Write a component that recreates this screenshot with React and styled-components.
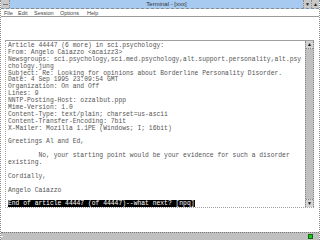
import React from "react";
import styled, { createGlobalStyle } from "styled-components";

const Global = createGlobalStyle`
  html, body { margin: 0; padding: 0; background: #ffffff; }
  body { width: 320px; height: 240px; overflow: hidden; }
`;

const Window = styled.div`
  width: 320px;
  height: 240px;
  box-sizing: border-box;
  display: flex;
  flex-direction: column;
  border-left: 1px dotted #8a8a8a;
  border-right: 1px dotted #8a8a8a;
  background: #ffffff;
  font-family: "Liberation Sans", Arial, sans-serif;
`;

const TitleBar = styled.div`
  height: 8px;
  display: flex;
  align-items: stretch;
  background: #a6caf0;
  border-bottom: 1px dashed #8a8a8a;
`;

const SysBox = styled.div`
  width: 8px;
  background: #c8c8c8;
  border-right: 1px dotted #8a8a8a;
  display: flex;
  align-items: center;
  justify-content: center;
  &::after {
    content: "";
    width: 5px;
    height: 1px;
    background: #777;
  }
`;

const Title = styled.div`
  flex: 1;
  text-align: center;
  font-size: 6px;
  line-height: 8px;
  color: #333;
  padding-left: 20px;
`;

const SizeBox = styled.div`
  width: 7px;
  background: #c8c8c8;
  border-left: 1px dotted #8a8a8a;
  font-size: 5px;
  line-height: 8px;
  text-align: center;
  color: #222;
`;

const MenuBar = styled.div`
  height: 7px;
  display: flex;
  align-items: center;
  padding-left: 3px;
  border-bottom: 1px solid #9a9a9a;
  background: #ffffff;
`;

const MenuItem = styled.span`
  font-size: 5.5px;
  color: #444;
  width: ${(p) => p.$w}px;
`;

const Client = styled.div`
  flex: 1;
  background: #ffffff;
  padding: 23px 5px 0 4px;
`;

const Panel = styled.div`
  height: 168px;
  box-sizing: border-box;
  display: flex;
  border-top: 1px solid #a0a0a0;
  border-left: 1px dotted #a0a0a0;
  border-bottom: 1px dotted #a0a0a0;
`;

const TextArea = styled.div`
  flex: 1;
  padding: 2px 0 0 2px;
  overflow: hidden;
  font-family: "Liberation Mono", "Courier New", monospace;
  font-size: 6.35px;
  line-height: 6.9px;
  color: #555;
  white-space: pre;
`;

const Line = styled.div`
  height: 6.9px;
`;

const Highlight = styled.span`
  background: #000;
  color: #fff;
`;

const Scrollbar = styled.div`
  width: 7px;
  display: flex;
  flex-direction: column;
  background: #c0c0c0;
  border-left: 1px dotted #888;
  border-right: 1px dotted #888;
`;

const Arrow = styled.div`
  height: 7px;
  background: #d4d4d4;
  border-top: ${(p) => (p.$bottom ? "1px dotted #888" : "none")};
  border-bottom: ${(p) => (p.$bottom ? "none" : "1px dotted #888")};
  font-size: 5px;
  line-height: 7px;
  text-align: center;
  color: #111;
`;

const Track = styled.div`
  flex: 1;
`;

const StatusBar = styled.div`
  height: 7px;
  display: flex;
  align-items: center;
  justify-content: space-between;
  background: #c0c0c0;
  border-top: 1px dotted #777;
  padding: 0 6px 0 0;
`;

const Tick = styled.div`
  width: 2px;
  height: 1px;
  background: #fff;
`;

const Led = styled.div`
  width: 5px;
  height: 5px;
  background: #22c322;
  border: 1px solid #0a6a0a;
  box-sizing: border-box;
`;

const lines = [
  "Article 44447 (6 more) in sci.psychology:",
  "From: Angelo Caiazzo <acaizz3>",
  "Newsgroups: sci.psychology,sci.med.psychology,alt.support.personality,alt.psy",
  "chology.jung",
  "Subject: Re: Looking for opinions about Borderline Personality Disorder.",
  "Date: 4 Sep 1995 23:09:54 GMT",
  "Organization: On and Off",
  "Lines: 9",
  "NNTP-Posting-Host: ozzalbut.ppp",
  "Mime-Version: 1.0",
  "Content-Type: text/plain; charset=us-ascii",
  "Content-Transfer-Encoding: 7bit",
  "X-Mailer: Mozilla 1.1PE (Windows; I; 16bit)",
  "",
  "Greetings Al and Ed,",
  "",
  "        No, your starting point would be your evidence for such a disorder",
  "existing.",
  "",
  "Cordially,",
  "",
  "Angelo Caiazzo",
  "",
];

const menus = [
  ["File", 14],
  ["Edit", 16],
  ["Session", 26],
  ["Options", 27],
  ["Help", 20],
];

export default function App() {
  return (
    <>
      <Global />
      <Window>
        <TitleBar>
          <SysBox />
          <Title>Terminal - [xxx]</Title>
          <SizeBox>▼</SizeBox>
          <SizeBox>▲</SizeBox>
        </TitleBar>
        <MenuBar>
          {menus.map(([m, w]) => (
            <MenuItem key={m} $w={w}>
              {m}
            </MenuItem>
          ))}
        </MenuBar>
        <Client>
          <Panel>
            <TextArea>
              {lines.map((l, i) => (
                <Line key={i}>{l || " "}</Line>
              ))}
              <Line>
                <Highlight>End of article 44447 (of 44447)--what next? [npq]</Highlight>
              </Line>
            </TextArea>
            <Scrollbar>
              <Arrow>▲</Arrow>
              <Track />
              <Arrow $bottom>▼</Arrow>
            </Scrollbar>
          </Panel>
        </Client>
        <StatusBar>
          <Tick />
          <Led />
        </StatusBar>
      </Window>
    </>
  );
}
